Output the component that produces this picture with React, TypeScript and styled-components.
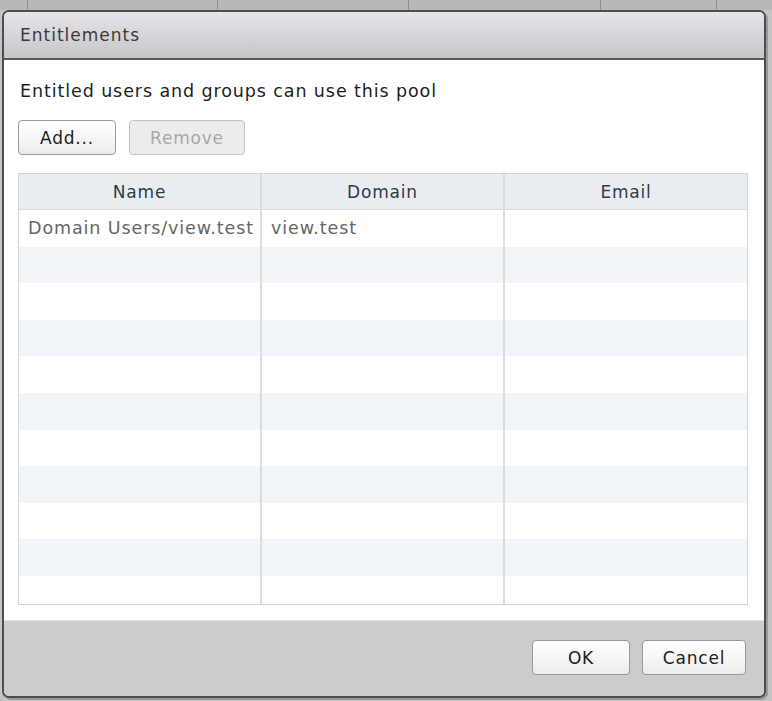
import React from 'react';
import styled, { createGlobalStyle } from 'styled-components';

const GlobalStyle = createGlobalStyle`
  html, body {
    margin: 0;
    padding: 0;
    background: #c4c4c4;
    font-family: "DejaVu Sans", Verdana, sans-serif;
  }
`;

const Page = styled.div`
  width: 772px;
  height: 701px;
  background: #c4c4c4;
  overflow: hidden;
`;

const Backdrop = styled.div`
  display: flex;
  height: 10px;
  background: #b8b8b8;
`;

const BackCell = styled.div<{ $w: number }>`
  width: ${p => p.$w}px;
  border-right: 1px solid #8f8f8f;
  flex-shrink: 0;
`;

const Dialog = styled.div`
  margin-left: 2px;
  width: 760px;
  height: 684px;
  border: 2px solid #4d4d4d;
  border-radius: 7px;
  box-shadow: 2px 2px 0 #9a9a9a;
  background: #fff;
  display: flex;
  flex-direction: column;
  overflow: hidden;
`;

const TitleBar = styled.div`
  height: 46px;
  flex-shrink: 0;
  background: linear-gradient(#e6e6ea, #c6c6ca);
  border-bottom: 2px solid #5a5a5a;
  display: flex;
  align-items: center;
  padding-left: 16px;
  font-size: 17px;
  letter-spacing: 1px;
  color: #3a3a3a;
`;

const Body = styled.div`
  flex: 1;
  padding: 21px 16px 0 14px;
  display: flex;
  flex-direction: column;
`;

const Intro = styled.div`
  font-size: 17.5px;
  letter-spacing: 0.9px;
  color: #1e1e1e;
  margin-left: 2px;
`;

const ButtonRow = styled.div`
  display: flex;
  gap: 13px;
  margin-top: 19px;
`;

const Button = styled.button<{ $w: number }>`
  width: ${p => p.$w}px;
  height: 35px;
  border: 1px solid #9a9a9a;
  border-radius: 4px;
  background: linear-gradient(#ffffff, #ececec);
  font-family: inherit;
  font-size: 17px;
  letter-spacing: 0.8px;
  color: #222;
  padding: 0;
  &:disabled {
    color: #a8a8a8;
    border-color: #c2c2c2;
    background: #ececec;
  }
`;

const Table = styled.div`
  margin-top: 18px;
  width: 730px;
  height: 432px;
  border: 1px solid #d6d6d6;
  display: grid;
  grid-template-columns: 243px 243px 1fr;
  grid-auto-rows: 36.6px;
  grid-template-rows: 36px;
  overflow: hidden;
  box-sizing: border-box;
`;

const HeadCell = styled.div<{ $last?: boolean }>`
  background: #e9edf1;
  border-right: ${p => (p.$last ? 'none' : '2px solid #dcdcdc')};
  border-bottom: 1px solid #d8dde2;
  display: flex;
  align-items: center;
  justify-content: center;
  font-size: 17px;
  letter-spacing: 0.8px;
  color: #2d3c48;
`;

const Cell = styled.div<{ $alt: boolean; $last?: boolean }>`
  background: ${p => (p.$alt ? '#f1f4f9' : '#fff')};
  border-right: ${p => (p.$last ? 'none' : '2px solid #dcdcdc')};
  display: flex;
  align-items: center;
  padding-left: 9px;
  font-size: 17.5px;
  letter-spacing: 0.9px;
  color: #666;
  white-space: nowrap;
  overflow: hidden;
`;

const Footer = styled.div`
  height: 74px;
  flex-shrink: 0;
  margin-top: 15px;
  background: #cccccc;
  border-top: 1px solid #e2e2e2;
  display: flex;
  justify-content: flex-end;
  align-items: flex-start;
  gap: 12px;
  padding: 19px 18px 0 0;
  position: relative;
`;

const Grip = styled.svg`
  position: absolute;
  right: 3px;
  bottom: 3px;
`;

const rows: string[][] = [['Domain Users/view.test', 'view.test', '']];
for (let i = 0; i < 10; i++) rows.push(['', '', '']);

export default function App() {
  return (
    <Page>
      <GlobalStyle />
      <Backdrop>
        <BackCell $w={27} />
        <BackCell $w={189} />
        <BackCell $w={190} />
        <BackCell $w={191} />
        <BackCell $w={115} />
      </Backdrop>
      <Dialog>
        <TitleBar>Entitlements</TitleBar>
        <Body>
          <Intro>Entitled users and groups can use this pool</Intro>
          <ButtonRow>
            <Button $w={98}>Add...</Button>
            <Button $w={116} disabled>Remove</Button>
          </ButtonRow>
          <Table>
            <HeadCell>Name</HeadCell>
            <HeadCell>Domain</HeadCell>
            <HeadCell $last>Email</HeadCell>
            {rows.map((r, i) =>
              r.map((c, j) => (
                <Cell key={`${i}-${j}`} $alt={i % 2 === 1} $last={j === 2}>
                  {c}
                </Cell>
              ))
            )}
          </Table>
        </Body>
        <Footer>
          <Button $w={98}>OK</Button>
          <Button $w={104}>Cancel</Button>
          <Grip width="14" height="14" viewBox="0 0 14 14">
            <g fill="#777">
              <rect x="10" y="2" width="2" height="2" />
              <rect x="6" y="6" width="2" height="2" />
              <rect x="10" y="6" width="2" height="2" />
              <rect x="2" y="10" width="2" height="2" />
              <rect x="6" y="10" width="2" height="2" />
              <rect x="10" y="10" width="2" height="2" />
            </g>
          </Grip>
        </Footer>
      </Dialog>
    </Page>
  );
}
